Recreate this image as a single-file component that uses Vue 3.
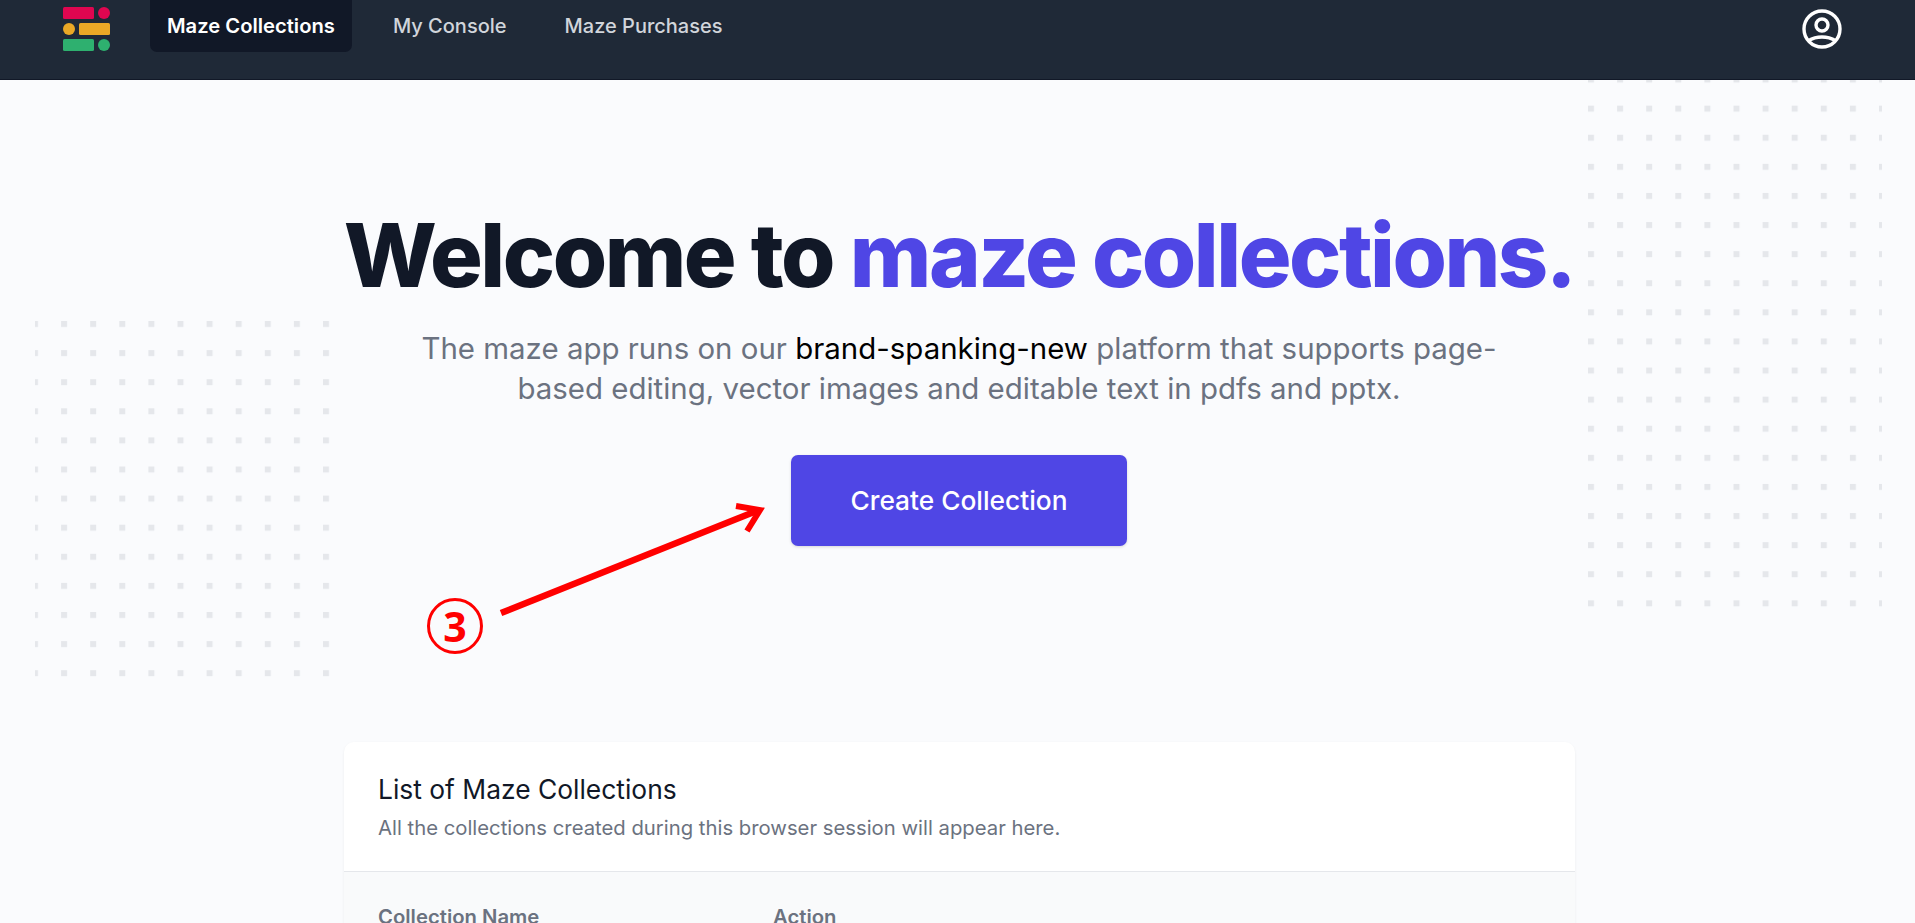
<template>
  <div class="page">
    <header class="topbar">
      <div class="brand">
        <svg width="48" height="44" viewBox="0 0 48 44">
          <rect x="0" y="0" width="31" height="12" rx="1.5" fill="#df0650" />
          <ellipse cx="41" cy="6" rx="6" ry="6" fill="#df0650" />
          <ellipse cx="6" cy="22" rx="6" ry="6" fill="#eaa826" />
          <rect x="16" y="16" width="31" height="12" rx="1.5" fill="#eaa826" />
          <rect x="0" y="32" width="31" height="12" rx="1.5" fill="#2eb06f" />
          <ellipse cx="41" cy="38" rx="6" ry="6" fill="#2eb06f" />
        </svg>
      </div>
      <nav class="menu">
        <a
          v-for="item in menu"
          :key="item"
          class="menu-item"
          :class="{ active: item === 'Maze Collections' }"
        >{{ item }}</a>
      </nav>
      <svg class="avatar" width="48" height="48" viewBox="0 0 24 24" fill="none" stroke="#fff" stroke-width="1.7">
        <path d="M5.121 17.804A13.937 13.937 0 0112 16c2.5 0 4.847.655 6.879 1.804M15 10a3 3 0 11-6 0 3 3 0 016 0zm6 2a9 9 0 11-18 0 9 9 0 0118 0z" />
      </svg>
    </header>

    <main class="content">
      <svg class="dots dots-left" width="295" height="356">
        <defs>
          <pattern id="dotsLeft" x="-3" y="0" width="29.1" height="29.1" patternUnits="userSpaceOnUse">
            <rect width="6" height="6" fill="#e5e7eb" />
          </pattern>
        </defs>
        <rect width="295" height="356" fill="url(#dotsLeft)" />
      </svg>
      <svg class="dots dots-right" width="294" height="528">
        <defs>
          <pattern id="dotsRight" x="0" y="-3.45" width="29.1" height="29.1" patternUnits="userSpaceOnUse">
            <rect width="6" height="6" fill="#e5e7eb" />
          </pattern>
        </defs>
        <rect width="294" height="528" fill="url(#dotsRight)" />
      </svg>

      <section class="hero">
        <h1>Welcome to <span>maze collections.</span></h1>
        <p>
          The maze app runs on our <b>brand-spanking-new</b> platform that supports page-<br />
          based editing, vector images and editable text in pdfs and pptx.
        </p>
        <button class="create">Create Collection</button>
      </section>

      <section class="card">
        <div class="card-head">
          <h2>List of Maze Collections</h2>
          <p>All the collections created during this browser session will appear here.</p>
        </div>
        <div class="table-head">
          <span class="col-name">Collection Name</span>
          <span>Action</span>
        </div>
      </section>

      <!-- 스크린샷 위에 그려진 빨간 표시 -->
      <svg class="arrow" width="290" height="130" viewBox="0 0 290 130">
        <path d="M10 116 L268 13" stroke="#ff0000" stroke-width="6.5" fill="none" />
        <path d="M245 9 L269 13 L256 34" stroke="#ff0000" stroke-width="6" fill="none" />
      </svg>
      <span class="step">3</span>
    </main>
  </div>
</template>

<script setup>
const menu = ["Maze Collections", "My Console", "Maze Purchases"];
</script>

<style>
html,
body {
  margin: 0;
  background: #fafbfd;
}
</style>

<style scoped>
.page {
  height: 923px;
  overflow: hidden;
  font-family: Inter, "Liberation Sans", sans-serif;
  background: #fafbfd;
}

.topbar {
  display: flex;
  align-items: flex-start;
  height: 79px;
  border-bottom: 1px solid #111827;
  background: #1f2937;
  padding-left: 63px;
  padding-right: 69px;
}

.brand {
  display: flex;
  width: 87px;
  padding-top: 7px;
}

.menu {
  display: flex;
  gap: 24px;
}

.menu-item {
  height: 52px;
  line-height: 52px;
  padding: 0 17px;
  border-radius: 0 0 7px 7px;
  font-size: 20px;
  font-weight: 500;
  color: #d1d5db;
}

.menu-item.active {
  background: #111827;
  color: #fff;
  font-size: 20.2px;
  font-weight: 600;
}

.avatar {
  margin-left: auto;
  margin-top: 5px;
}

.content {
  position: relative;
  padding-top: 131px;
}

.dots {
  position: absolute;
  pointer-events: none;
}

.dots-left {
  left: 35px;
  top: 241px;
}

.dots-right {
  left: 1588px;
  top: 0;
}

.hero {
  position: relative;
  display: flex;
  flex-direction: column;
  align-items: center;
  padding-left: 3px;
  text-align: center;
}

h1 {
  margin: 0;
  font-size: 88px;
  line-height: 88px;
  font-weight: 800;
  letter-spacing: -2.5px;
  color: #111827;
}

h1 span {
  color: #4f46e5;
}

.hero p {
  margin: 29px 0 0;
  font-size: 29.45px;
  line-height: 40px;
  color: #6b7280;
}

.hero b {
  font-weight: 400;
  color: #000;
}

.create {
  width: 336px;
  height: 91px;
  margin-top: 47px;
  border: 0;
  border-radius: 7px;
  background: #4f46e5;
  box-shadow: 0 1px 3px rgba(0, 0, 0, 0.15);
  font-family: inherit;
  font-size: 26.3px;
  font-weight: 500;
  color: #fff;
}

.card {
  position: relative;
  width: 1231px;
  margin: 196px 0 0 344px;
  border-radius: 10px 10px 0 0;
  background: #fff;
  box-shadow: 0 1px 3px rgba(0, 0, 0, 0.06);
}

.card-head {
  height: 130px;
  padding: 32px 34px 0;
  box-sizing: border-box;
  border-bottom: 1px solid #e5e7eb;
}

h2 {
  margin: 0;
  font-size: 26.4px;
  line-height: 30px;
  font-weight: 400;
  color: #111827;
}

.card-head p {
  margin: 12px 0 0;
  font-size: 20.3px;
  line-height: 24px;
  color: #6b7280;
}

.table-head {
  display: flex;
  height: 100px;
  padding: 33px 34px 0;
  box-sizing: border-box;
  background: #f9fafb;
  font-size: 20.3px;
  line-height: 24px;
  font-weight: 600;
  color: #6b7280;
}

.col-name {
  width: 395px;
}

.arrow {
  position: absolute;
  left: 491px;
  top: 417px;
}

.step {
  position: absolute;
  left: 427px;
  top: 518px;
  display: flex;
  align-items: center;
  justify-content: center;
  width: 56px;
  height: 56px;
  box-sizing: border-box;
  border: 3px solid #ff0000;
  border-radius: 50%;
  font-family: "Noto Sans", sans-serif;
  font-size: 41px;
  font-weight: 700;
  line-height: 1;
  color: #ff0000;
}
</style>
